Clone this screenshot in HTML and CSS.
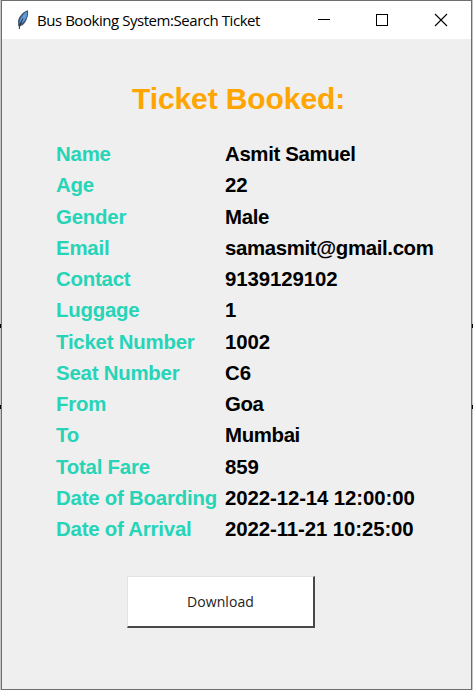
FILE: index.html
```html
<!DOCTYPE html>
<html lang="en">
<head>
<meta charset="utf-8">
<title>Bus Booking System:Search Ticket</title>
<link rel="stylesheet" href="styles.css">
</head>
<body>
<div class="window">
  <header class="titlebar">
    <svg class="feather" width="16" height="20" viewBox="0 0 16 20">
      <path d="M12.8 0.3C8.5 1.5 4 6 3 11L3.2 16.5L7.6 15.2C11.6 12 14 5 12.8 0.3Z" fill="#44566a"/>
      <path d="M11.8 1.5C8 4 5 8.5 4.4 12.8L7.4 12.8C11 9.5 12.6 5 11.8 1.5Z" fill="#5b9be0"/>
      <path d="M8 8.5C6 12 4.8 15 4.2 19" fill="none" stroke="#1e2833"/>
    </svg>
    <span class="caption">Bus Booking System:Search Ticket</span>
    <svg class="controls" width="131" height="14" viewBox="0 0 131 14" fill="none" stroke="#000">
      <path d="M1 6.5H13M59.5 1.5h11v11h-11z" shape-rendering="crispEdges"/>
      <path d="M118 1L130 13M130 1L118 13" stroke-width="1.1"/>
    </svg>
  </header>
  <main class="content">
    <h1>Ticket Booked:</h1>
    <dl class="ticket">
      <dt>Name</dt><dd>Asmit Samuel</dd>
      <dt>Age</dt><dd class="num">22</dd>
      <dt>Gender</dt><dd>Male</dd>
      <dt>Email</dt><dd>samasmit@gmail.com</dd>
      <dt>Contact</dt><dd class="num">9139129102</dd>
      <dt>Luggage</dt><dd class="num">1</dd>
      <dt>Ticket Number</dt><dd class="num">1002</dd>
      <dt>Seat Number</dt><dd class="num">C6</dd>
      <dt>From</dt><dd>Goa</dd>
      <dt>To</dt><dd>Mumbai</dd>
      <dt>Total Fare</dt><dd class="num">859</dd>
      <dt>Date of Boarding</dt><dd class="num">2022-12-14 12:00:00</dd>
      <dt>Date of Arrival</dt><dd class="num">2022-11-21 10:25:00</dd>
    </dl>
    <button class="download" type="button">Download</button>
  </main>
</div>
</body>
</html>
```
FILE: styles.css
```css
* { box-sizing: border-box; }

body {
  margin: 0;
  height: 690px;
  overflow: hidden;
  padding: 0 1px;
  /* desktop edges visible on both sides of the window */
  background: linear-gradient(#c6c6c6 0 324px, #000 324px 328px, #c6c6c6 328px 405px, #000 405px 409px, #c6c6c6 409px);
}

.window {
  height: 690px;
  border: 1px solid #6e6e6e;
  background: #efefef;
}

.titlebar {
  display: flex;
  align-items: center;
  height: 38px;
  padding: 0 23px 0 13px;
  background: #fff;
}

.feather { flex: none; margin-right: 6px; }

.caption {
  flex: 1;
  font: 15px/20px "Open Sans", "Noto Sans", sans-serif;
  letter-spacing: -0.45px;
  white-space: nowrap;
  color: #000;
}

.controls { flex: none; }

.content {
  padding: 42px 0 0 54px;
  font-family: "Liberation Sans", Arial, sans-serif;
}

h1 {
  margin: 0 0 22px 76px;
  font-size: 30px;
  line-height: 36px;
  font-weight: bold;
  letter-spacing: -0.1px;
  color: #ffa500;
}

.ticket {
  display: grid;
  grid-template-columns: 169px 1fr;
  grid-auto-rows: 31.25px;
  margin: 0;
  font-size: 20.4px;
  line-height: 31.25px;
  font-weight: bold;
  letter-spacing: -0.21px;
  white-space: nowrap;
}

dt { color: #26d4b7; }
dd { margin: 0; color: #000; letter-spacing: -0.35px; }
.num { letter-spacing: -0.1px; }

.download {
  display: block;
  width: 188px;
  height: 52px;
  margin: 31px 0 0 71px;
  padding: 0;
  border: solid;
  border-width: 1px 2px 2px 1px;
  border-color: #e3e3e3 #484848 #484848 #e3e3e3;
  background: #fff;
  font: 14px/20px "Open Sans", "Noto Sans", sans-serif;
  letter-spacing: 0.08px;
  color: #222;
}
```
